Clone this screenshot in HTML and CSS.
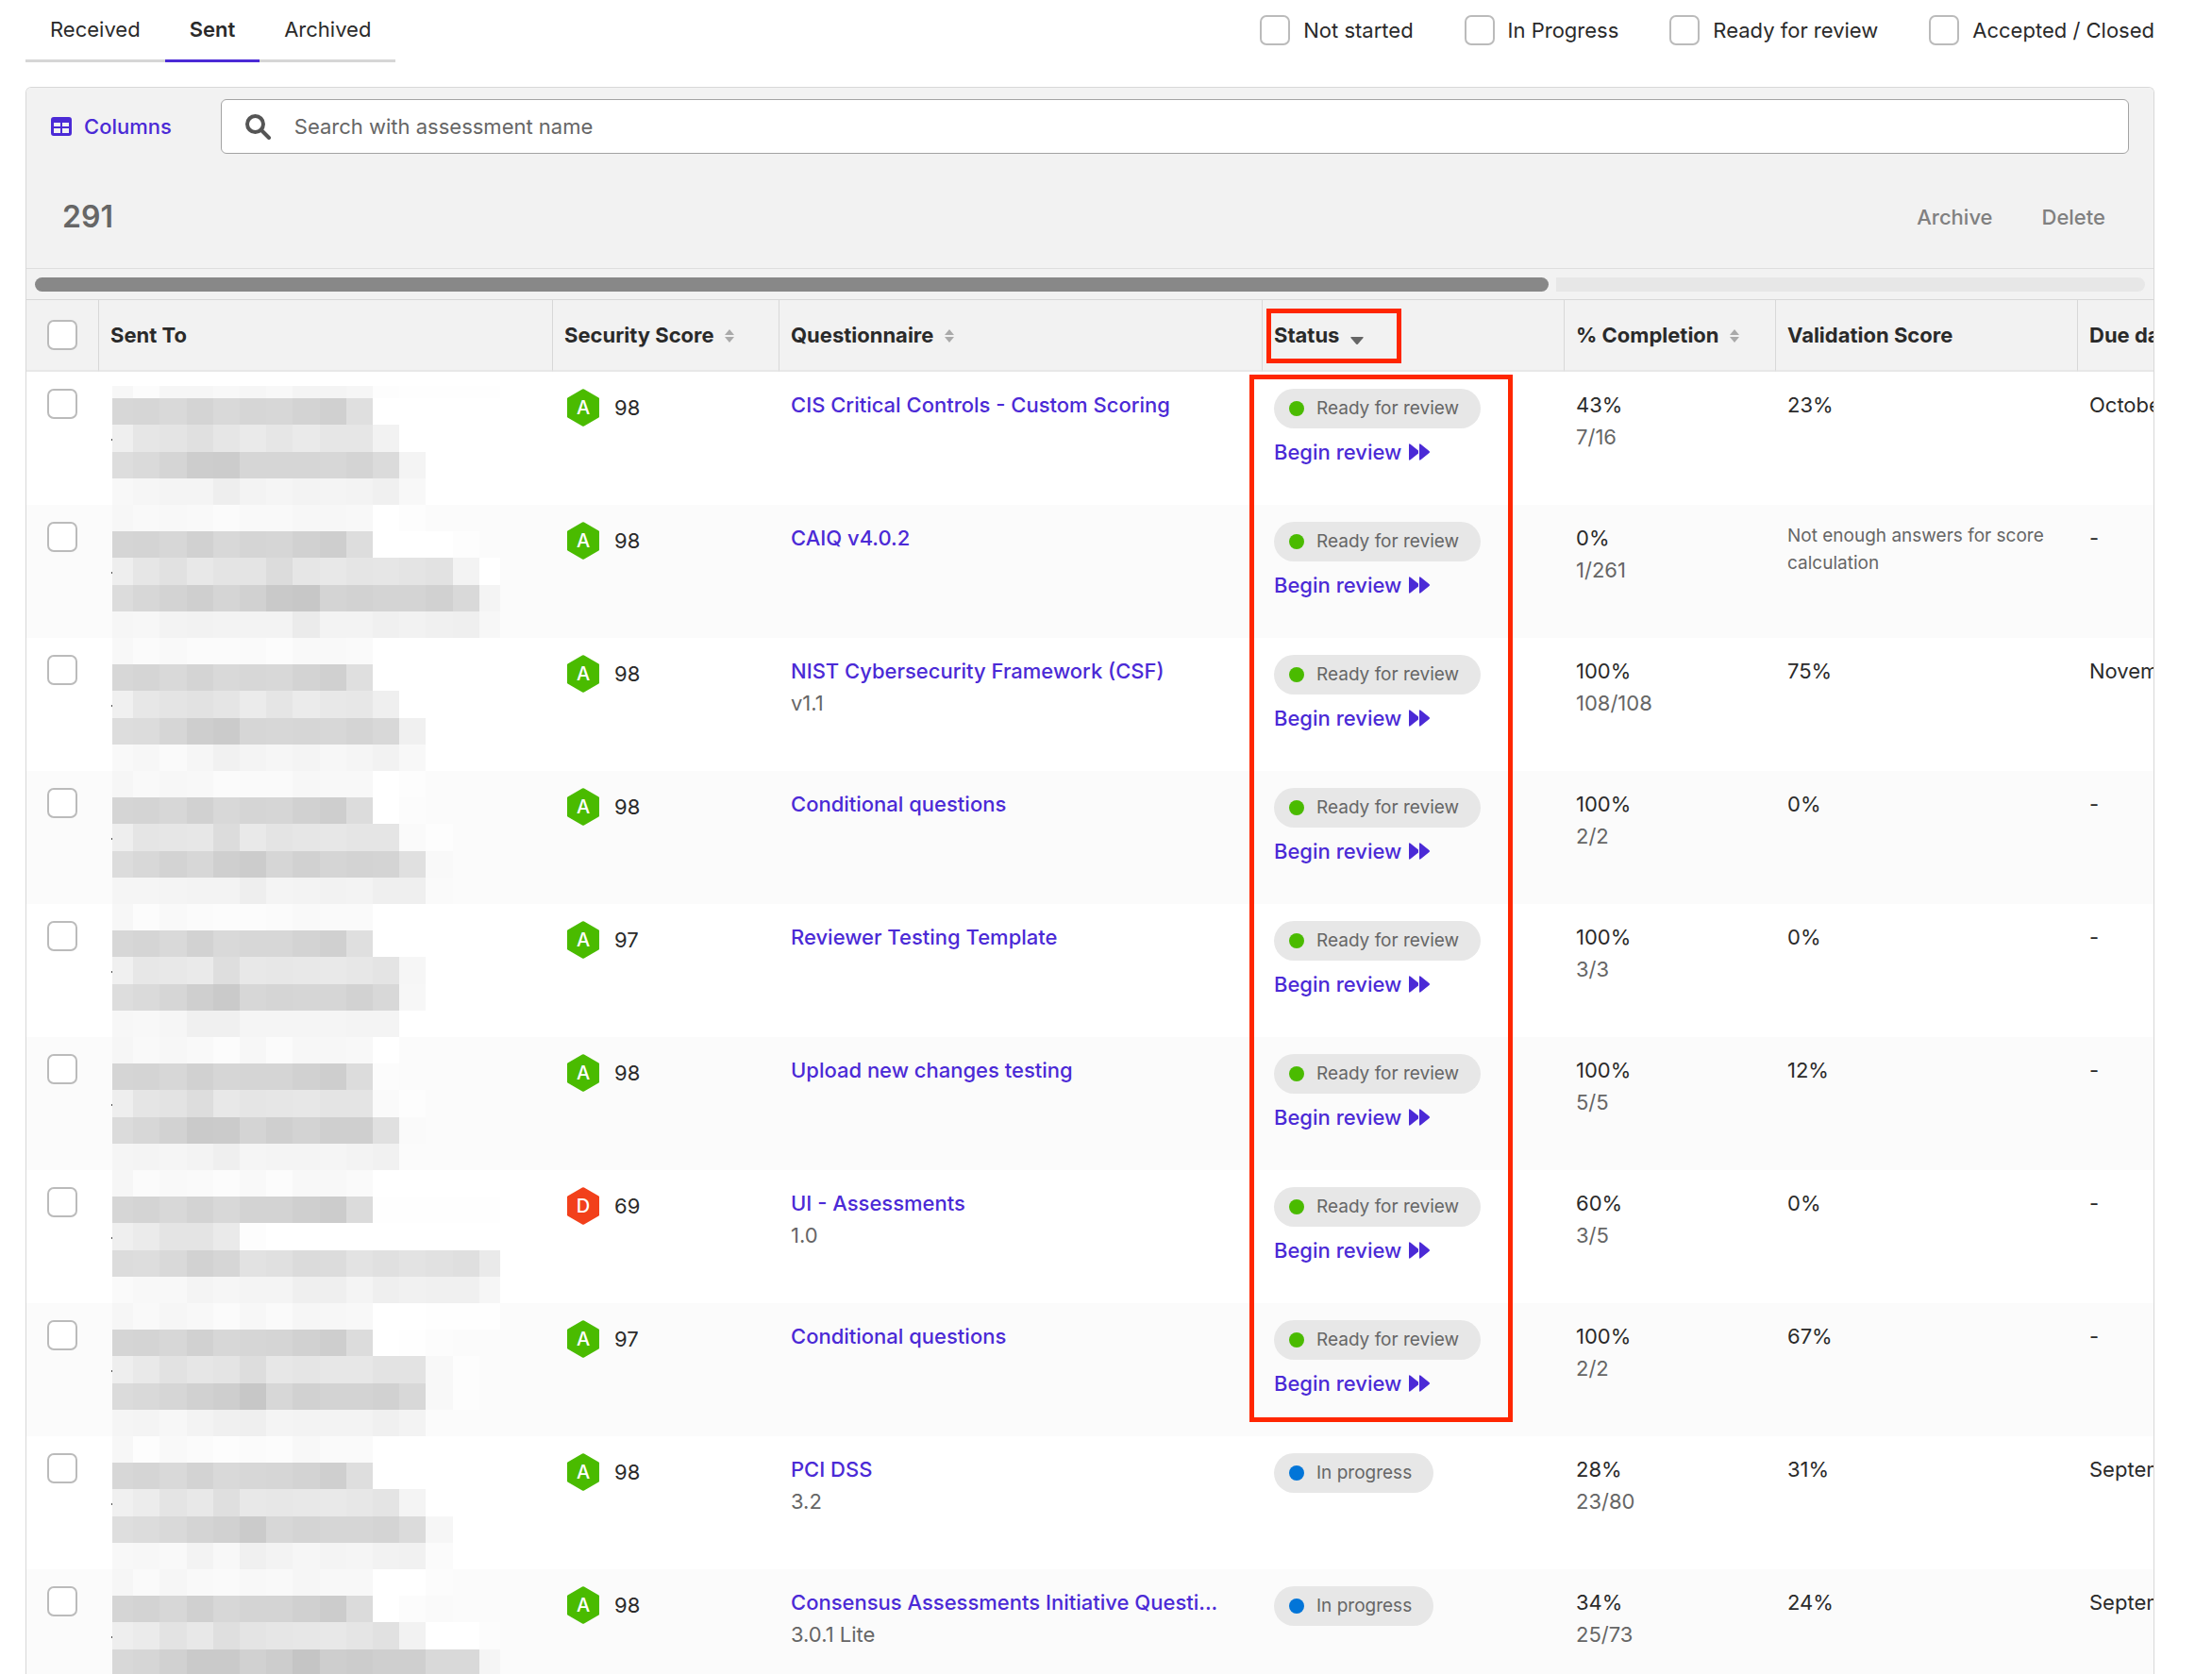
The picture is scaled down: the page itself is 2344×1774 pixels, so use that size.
FILE: index.html
```html
<!DOCTYPE html>
<html lang="en">
<head>
  <meta charset="UTF-8" />
  <meta name="viewport" content="width=device-width, initial-scale=1.0"/>
  <title>Assessments</title>
  <link rel="stylesheet" href="styles.css">
</head>
<body>
  <main class="page">
    <div class="topbar">
      <nav class="tabs">
        <a href="#received" class="tab">Received</a>
        <a href="#sent" class="tab active">Sent</a>
        <a href="#archived" class="tab">Archived</a>
      </nav>
      <div class="filters">
        <label class="filter"><input type="checkbox" class="check">Not started</label>
        <label class="filter"><input type="checkbox" class="check">In Progress</label>
        <label class="filter"><input type="checkbox" class="check">Ready for review</label>
        <label class="filter"><input type="checkbox" class="check">Accepted / Closed</label>
      </div>
    </div>

    <section class="panel">
      <div class="toolbar">
        <button type="button" class="columns-btn">
          <svg width="22" height="20" viewBox="0 0 22 20"><path fill="currentColor" fill-rule="evenodd" d="M3 0h16a3 3 0 0 1 3 3v14a3 3 0 0 1-3 3H3a3 3 0 0 1-3-3V3a3 3 0 0 1 3-3zM3 6v4h7V6zM12 6v4h7V6zM3 12v5h7v-5zM12 12v5h7v-5z"/></svg>
          Columns
        </button>
        <div class="search">
          <svg width="27" height="27" viewBox="0 0 27 27" fill="none" stroke="#555" stroke-linecap="round"><circle cx="10.500" cy="10.500" r="8.500" stroke-width="4"/><path d="M17 17l8 8" stroke-width="4"/></svg>
          <input type="text" aria-label="Search with assessment name" placeholder="Search with assessment name">
        </div>
      </div>

      <div class="summary">
        <span class="count">291</span>
        <div class="actions">
          <button type="button">Archive</button>
          <button type="button">Delete</button>
        </div>
      </div>

      <div class="scroller">
        <div class="thumb"></div>
        <div class="track"></div>
      </div>

      <div class="table-wrap">
        <table>
          <colgroup>
            <col class="c-check"><col class="c-sent"><col class="c-score"><col class="c-quest">
            <col class="c-status"><col class="c-comp"><col class="c-valid"><col class="c-due">
          </colgroup>
          <thead>
            <tr>
              <th class="check-cell"><input type="checkbox" class="check" aria-label="Select all"></th>
              <th>Sent To</th>
              <th>Security Score <svg class="sort" width="10" height="14" viewBox="0 0 10 14"><path d="M5 0l5 6H0zM5 14l5-6H0z"/></svg></th>
              <th>Questionnaire <svg class="sort" width="10" height="14" viewBox="0 0 10 14"><path d="M5 0l5 6H0zM5 14l5-6H0z"/></svg></th>
              <th>Status <svg class="sort sorted" width="14" height="14" viewBox="0 0 14 14"><path d="M1 6h12q1 0 .6 1L8 13.500q-1 1-2 0L.4 7Q0 6 1 6z"/></svg></th>
              <th>% Completion <svg class="sort" width="10" height="14" viewBox="0 0 10 14"><path d="M5 0l5 6H0zM5 14l5-6H0z"/></svg></th>
              <th>Validation Score</th>
              <th>Due date</th>
            </tr>
          </thead>
          <tbody id="rows"></tbody>
        </table>
        <div class="mark mark-head"></div>
        <div class="mark mark-body"></div>
      </div>
    </section>
  </main>

  <script src="script.js"></script>
</body>
</html>
```
FILE: styles.css
```css
body {
  font-family: Inter, "Liberation Sans", sans-serif;
  font-size: 22px;
  line-height: 34px;
  margin: 0;
  color: #2a2a2a;
  background: #fff;
}
.page {
  display: flex;
  flex-direction: column;
  height: 100vh;
  overflow: hidden;
  box-sizing: border-box;
  padding: 0 61px 0 27px;
}
button {
  font: inherit;
  border: none;
  background: none;
  padding: 0;
  cursor: pointer;
}
a {
  color: #4b2ad6;
  font-weight: 500;
  text-decoration: none;
}
.topbar {
  display: flex;
  justify-content: space-between;
  align-items: flex-start;
  flex: none;
  height: 92px;
}
.tabs {
  display: flex;
}
.tab {
  color: #2a2a2a;
  font-weight: 400;
  padding: 14px 26px 15px;
  border-bottom: 3px solid #d6d6d6;
}
.tab.active {
  font-weight: 600;
  border-color: #4b2ad6;
}
.filters {
  display: flex;
  gap: 54px;
  padding-top: 15px;
}
.filter {
  display: flex;
  align-items: center;
  gap: 14px;
}
.check {
  appearance: none;
  display: block;
  width: 32px;
  height: 32px;
  margin: 0;
  box-sizing: border-box;
  border: 2px solid #bbb;
  border-radius: 7px;
  background: #fff;
}
.panel {
  flex: 1;
  min-height: 0;
  overflow: hidden;
  border: 1px solid #d8d8d8;
  border-bottom: none;
  border-radius: 6px 6px 0 0;
}
.toolbar {
  display: flex;
  align-items: center;
  gap: 52px;
  background: #f2f2f2;
  padding: 12px 26px 0;
}
.columns-btn {
  display: flex;
  align-items: center;
  gap: 13px;
  color: #4b2ad6;
  font-weight: 500;
}
.search {
  flex: 1;
  display: flex;
  align-items: center;
  gap: 25px;
  height: 56px;
  padding-left: 25px;
  border: 1px solid #a3a3a3;
  border-radius: 6px;
  background: #fff;
}
.search input {
  flex: 1;
  border: none;
  outline: none;
  padding: 0;
  font: inherit;
  background: none;
}
.search input::placeholder {
  color: #666;
  opacity: 1;
}
.summary {
  display: flex;
  justify-content: space-between;
  align-items: center;
  height: 121px;
  box-sizing: border-box;
  padding: 13px 51px 0 38px;
  background: #f2f2f2;
}
.count {
  font-size: 32px;
  font-weight: 600;
  color: #666;
}
.actions {
  display: flex;
  gap: 52px;
}
.actions button {
  color: #808080;
  font-weight: 500;
}
.scroller {
  display: flex;
  gap: 8px;
  padding: 9px 9px 8px;
  border-top: 1px solid #dedede;
  background: #f2f2f2;
}
.thumb {
  flex: 1604;
  height: 15px;
  border-radius: 8px;
  background: #888;
}
.track {
  flex: 624;
  height: 15px;
  border-radius: 0 8px 8px 0;
  background: #e7e7e7;
}
.table-wrap {
  position: relative;
}
table {
  table-layout: fixed;
  width: 2494px;
  min-width: 100%;
  border-collapse: separate;
  border-spacing: 0;
}
.c-check { width: 77px; }
.c-sent { width: 481px; }
.c-score { width: 240px; }
.c-quest { width: 512px; }
.c-status { width: 320px; }
.c-comp { width: 224px; }
.c-valid { width: 320px; }
.c-due { width: 320px; }
th {
  height: 77px;
  box-sizing: border-box;
  padding: 0 12px;
  text-align: left;
  font-weight: 700;
  white-space: nowrap;
  background: #f2f2f2;
  border-top: 1px solid #d8d8d8;
  border-bottom: 2px solid #e8e8e8;
  border-right: 1px solid #d8d8d8;
}
.sort {
  fill: #aaa;
  margin-left: 6px;
}
.sorted {
  fill: #666;
  vertical-align: -2px;
}
td {
  height: 141px;
  box-sizing: border-box;
  padding: 18px 12px 0;
  vertical-align: top;
}
tbody tr:nth-child(even) {
  background: #fbfbfb;
}
th.check-cell {
  padding: 0 22px;
}
td.check-cell {
  padding: 18px 22px 0;
}
td.sent {
  position: relative;
  padding: 0 14px;
}
/* speck of the name that sticks out left of the mask */
td.sent::before {
  content: "";
  position: absolute;
  left: 13px;
  top: 71px;
  width: 1px;
  height: 2px;
  background: #555;
}
.mosaic {
  display: grid;
  grid-template-columns: 22fr repeat(13, 28fr) 22fr;
  grid-template-rows: repeat(5, 1fr);
  width: 411px;
  height: 141px;
}
tr:first-child .mosaic {
  clip-path: inset(15px 0 0 0);
}
.score {
  display: flex;
  align-items: center;
  gap: 15px;
  padding-left: 2px;
}
.score svg {
  display: block;
}
.score text {
  font-size: 20px;
  font-weight: 500;
  fill: #fff;
  text-anchor: middle;
}
.quest {
  display: block;
  white-space: nowrap;
}
.sub {
  color: #666;
}
.pill {
  display: flex;
  align-items: center;
  gap: 13px;
  width: max-content;
  height: 42px;
  padding: 0 23px 0 16px;
  border-radius: 21px;
  background: #e7e7e7;
  color: #666;
  font-size: 19px;
}
.dot {
  width: 16px;
  height: 16px;
  border-radius: 50%;
  background: #4abb00;
}
.dot.progress {
  background: #0275d8;
}
.begin {
  display: flex;
  align-items: center;
  gap: 8px;
  padding-top: 8px;
}
.note {
  color: #666;
  font-size: 19px;
  line-height: 29px;
}
.mark {
  position: absolute;
  box-sizing: border-box;
  border: 5px solid #ff2600;
  pointer-events: none;
}
.mark-head {
  left: 1314px;
  top: 10px;
  width: 143px;
  height: 58px;
}
.mark-body {
  left: 1296px;
  top: 80px;
  width: 279px;
  height: 1110px;
}
```
FILE: script.js
```js
// grey levels (hex pairs) of the masked recipient names, five bands per row
const rows = [
  { grade: "A", score: 98, name: "CIS Critical Controls - Custom Scoring", status: "ready", pct: "43%", done: "7/16", valid: "23%", due: "October 31",
    mask: ["f7fcf6f6f8f6f8f4f4f6fdfefefefe", "d7d6d9d4d9d6d7d3d0dfffffffffff", "efe6e4e0e6eae6eae6e6f2ffffffff", "dddad5cdccd6d6d6d7d4dbf4ffffff", "f8f6f4f4eef3f5f3f4f3f0f8ffffff"] },
  { grade: "A", score: 98, name: "CAIQ v4.0.2", status: "ready", pct: "0%", done: "1/261", note: "Not enough answers for score calculation", due: "-",
    mask: ["f7f9f8f9fbf9f9f7f7f8fffdfbfbfb", "d5d4d7d1d8d5d6d1ceddfffffffdfb", "eee6e1e8e4e4dce6e8e5e6e4e2f3ff", "dcd7d3cfd5d1c9c7d4d2d4d4d1d9f4", "f6f7f3f2f3f3f3ebf3f3f0f2f0eff7"] },
  { grade: "A", score: 98, name: "NIST Cybersecurity Framework (CSF)", sub: "v1.1", status: "ready", pct: "100%", done: "108/108", valid: "75%", due: "November 15",
    mask: ["f8fbf9fbfbfafcf9f9faffffffffff", "d7d5d9d4d9d7d8d3d0dfffffffffff", "f0e7e4e2e5ebe5ebe8e7efffffffff", "dddcd6cecbd6d7d6d7d4d8f0ffffff", "f9f7faf6f1f4f6f4f7f5f2f8ffffff"] },
  { grade: "A", score: 98, name: "Conditional questions", status: "ready", pct: "100%", done: "2/2", valid: "0%", due: "-",
    mask: ["f6f9f7f8fbfafaf7f8f8fffdfbfbfb", "d5d4d7d1d8d5d6d1cedcfffcfbfbfb", "eee5e6e7dce9e4e6e7e5e5fafdfbfb", "dcd8d3d7cfccd6d1d5d3d4e0f9fbfb", "f5f5f4f3f3eef4f3f2f3efeffafbfb"] },
  { grade: "A", score: 97, name: "Reviewer Testing Template", status: "ready", pct: "100%", done: "3/3", valid: "0%", due: "-",
    mask: ["f7fcf9fbfcfcfbf9fafaffffffffff", "d7d5d9d2d9d7d7d3d0dfffffffffff", "f0e7e8eadee8e7e8e9e7e4f6ffffff", "dddad6cfcad7d5d6d6d2d8f7ffffff", "f7f8f6f0f0f5f5f5f5f4f4ffffffff"] },
  { grade: "A", score: 98, name: "Upload new changes testing", status: "ready", pct: "100%", done: "5/5", valid: "12%", due: "-",
    mask: ["f6f9f7f9fcf7fbf7f7f8fffbfbfbfb", "d5d4d7d1d6d5d5d1cedcfcfbfbfbfb", "eee5e3dde8e5e6e7e4e4fafdfbfbfb", "dbd7d2cacbd4cfd3cfcfe0fafbfbfb", "f5f4f5f3eff5f4f4f5f3f1fbfbfbfb"] },
  { grade: "D", score: 69, name: "UI - Assessments", sub: "1.0", status: "ready", pct: "60%", done: "3/5", valid: "0%", due: "-",
    mask: ["f6fbf9fafcf9fcf8f8faffffffffff", "d6d4d8d3d8d3d3cfccdbfefefefefe", "efebe4e4eafdffffffffffffffffff", "dcddd9d2d6e2e0dbdce3e0e3e1dfea", "faf8f8f4f6f4f4efeff4eff1f0f0f6"] },
  { grade: "A", score: 97, name: "Conditional questions", status: "ready", pct: "100%", done: "2/2", valid: "67%", due: "-",
    mask: ["f6f9f6f8fbf7faf6f7f8fffffefefe", "d5d4d7d1d7d6d5d1cedcfffefcfbfb", "eee9e2e6e4dde7e5e7e7e3e3f8fdfb", "dbd9d6d1cec7d7d1d3d3d1d8f8fdfb", "f5f4f7f3f0eff4f3f3f3f0f3fbfbfb"] },
  { grade: "A", score: 98, name: "PCI DSS", sub: "3.2", status: "progress", pct: "28%", done: "23/80", valid: "31%", due: "September 30",
    mask: ["f7fdf9fbfdfbfcf8fafaffffffffff", "d7d5d9d3d9d7d6d3cfdeffffffffff", "f0ece4e8dfe8e7e8e9e7e4f4ffffff", "dedcd9d4d1cbd7d4d6d6d4dbf6ffff", "f8f7f9f3f8f0f3f6f4f5f2f1fbffff"] },
  { grade: "A", score: 98, name: "Consensus Assessments Initiative Questi...", sub: "3.0.1 Lite", status: "progress", pct: "34%", done: "25/73", valid: "24%", due: "September 28",
    mask: ["f6faf6f9faf8f9f6f8f8fffffcfbfb", "d5d3d7d0d7d4d4d0ccdbfffcfafbfb", "eeebe3e8dfe4e6e7e8e5e1f2fffffc", "d8d6d1cacad1cdc5cecccfcfd9d9f5", "f5f5f4f3f3eef4f3f2f3efeff2f2f8"] }
];

const colors = { A: "#4abb00", D: "#f2401b" };

function mosaic(mask) {
  const cells = mask.join("").match(/../g);
  return `<div class="mosaic">${cells.map(c => `<i style="background:#${c}${c}${c}"></i>`).join("")}</div>`;
}

function status(kind) {
  if (kind === "progress") {
    return '<span class="pill"><span class="dot progress"></span>In progress</span>';
  }
  return `<span class="pill"><span class="dot"></span>Ready for review</span>
    <a href="#review" class="begin">Begin review
      <svg width="22" height="18" viewBox="0 0 22 18"><path fill="currentColor" d="M0 1.500Q0-.5 1.500.7L10 7.500V9v1.500L1.500 17.300Q0 18.500 0 16.500zM11 1.500Q11-.5 12.500.7L21.500 8q1 1 0 2l-9 7.300Q11 18.500 11 16.500z"/></svg>
    </a>`;
}

document.getElementById("rows").innerHTML = rows.map(r => `
  <tr>
    <td class="check-cell"><input type="checkbox" class="check" aria-label="Select ${r.name}"></td>
    <td class="sent">${mosaic(r.mask)}</td>
    <td><div class="score">
      <svg width="36" height="40" viewBox="0 0 36 40"><path fill="${colors[r.grade]}" d="M17 .5q1-.6 2 0l15.500 9q.5.3.5 1v19q0 .7-.5 1L19 39.500q-1 .6-2 0l-15.500-9q-.5-.3-.5-1v-19q0-.7.5-1z"/><text x="18" y="27">${r.grade}</text></svg>
      ${r.score}
    </div></td>
    <td><a href="#assessment" class="quest">${r.name}</a>${r.sub ? `<div class="sub">${r.sub}</div>` : ""}</td>
    <td>${status(r.status)}</td>
    <td>${r.pct}<div class="sub">${r.done}</div></td>
    <td>${r.note ? `<div class="note">${r.note}</div>` : r.valid}</td>
    <td>${r.due}</td>
  </tr>`).join("");
```
